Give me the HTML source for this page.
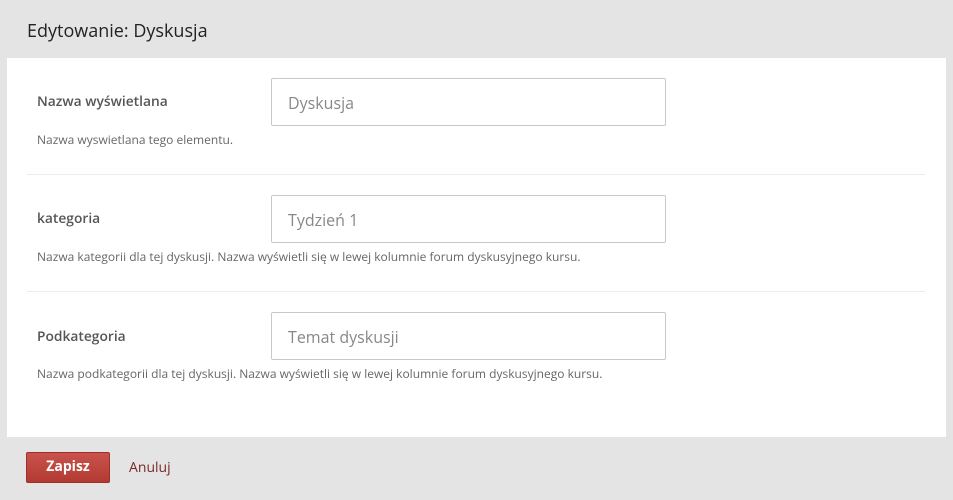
<!DOCTYPE html>
<html><head><meta charset="utf-8"><style>
body{margin:0;width:953px;height:500px;background:#e4e4e4;font-family:"Open Sans","Liberation Sans",sans-serif;position:relative;overflow:hidden}
.t{position:absolute;left:27px;top:19px;font-size:18px;color:#222}
.p{position:absolute;left:7px;top:58px;width:939px;height:379px;background:#fff}
.l{position:absolute;left:30px;font-size:13.8px;font-weight:600;color:#555}
.h{position:absolute;left:30px;font-size:12px;color:#666}
.i{position:absolute;left:264px;border:1px solid #c8c8c8;border-radius:2px;box-sizing:border-box;width:395px;height:48px;font-size:16px;color:#888;padding:13px 0 0 16px}
.s{position:absolute;left:20px;width:898px;height:1px;background:#ececec}
.b{position:absolute;left:26px;top:452px;width:84px;height:31px;box-sizing:border-box;background:linear-gradient(#c9534c,#b23a33);border:1px solid #9c2f2a;border-radius:2px;color:#fff;font-weight:bold;font-size:14px;text-align:center;line-height:28px}
.a{position:absolute;left:129px;top:458px;font-size:14px;color:#7a2a2a}
</style></head><body>
<div class="t">Edytowanie: Dyskusja</div>
<div class="p">
<div class="l" style="top:34px">Nazwa wyświetlana</div>
<div class="i" style="top:20px">Dyskusja</div>
<div class="h" style="top:73px">Nazwa wyswietlana tego elementu.</div>
<div class="s" style="top:116px"></div>
<div class="l" style="top:151px">kategoria</div>
<div class="i" style="top:137px">Tydzień 1</div>
<div class="h" style="top:190px">Nazwa kategorii dla tej dyskusji. Nazwa wyświetli się w lewej kolumnie forum dyskusyjnego kursu.</div>
<div class="s" style="top:233px"></div>
<div class="l" style="top:269px">Podkategoria</div>
<div class="i" style="top:254px">Temat dyskusji</div>
<div class="h" style="top:307px">Nazwa podkategorii dla tej dyskusji. Nazwa wyświetli się w lewej kolumnie forum dyskusyjnego kursu.</div>
</div>
<div class="b">Zapisz</div>
<div class="a">Anuluj</div>
</body></html>
